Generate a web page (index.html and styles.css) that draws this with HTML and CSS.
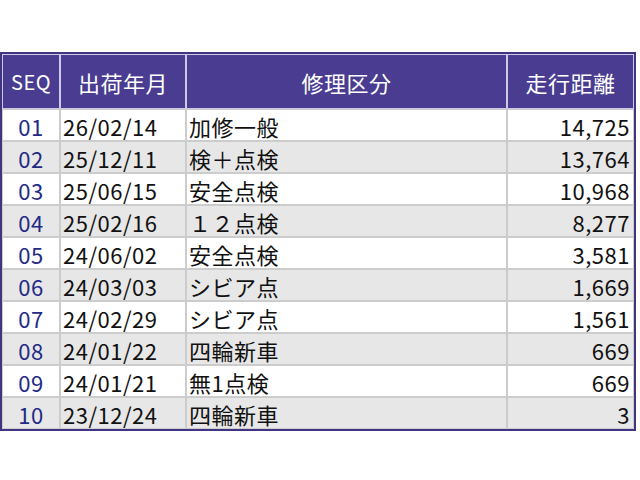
FILE: index.html
```html
<!DOCTYPE html>
<html lang="ja">
<head>
<meta charset="utf-8">
<link rel="stylesheet" href="styles.css">
</head>
<body>
<div class="wrap">
<table class="list">
<colgroup>
<col class="c-seq"><col class="c-date"><col class="c-kind"><col class="c-dist">
</colgroup>
<thead>
<tr><th class="seq-h">SEQ</th><th>出荷年月</th><th>修理区分</th><th>走行距離</th></tr>
</thead>
<tbody>
<tr><td class="seq">01</td><td class="date">26/02/14</td><td class="kind">加修一般</td><td class="dist">14,725</td></tr>
<tr class="alt"><td class="seq">02</td><td class="date">25/12/11</td><td class="kind">検＋点検</td><td class="dist">13,764</td></tr>
<tr><td class="seq">03</td><td class="date">25/06/15</td><td class="kind">安全点検</td><td class="dist">10,968</td></tr>
<tr class="alt"><td class="seq">04</td><td class="date">25/02/16</td><td class="kind">１２点検</td><td class="dist">8,277</td></tr>
<tr><td class="seq">05</td><td class="date">24/06/02</td><td class="kind">安全点検</td><td class="dist">3,581</td></tr>
<tr class="alt"><td class="seq">06</td><td class="date">24/03/03</td><td class="kind">シビア点</td><td class="dist">1,669</td></tr>
<tr><td class="seq">07</td><td class="date">24/02/29</td><td class="kind">シビア点</td><td class="dist">1,561</td></tr>
<tr class="alt"><td class="seq">08</td><td class="date">24/01/22</td><td class="kind">四輪新車</td><td class="dist">669</td></tr>
<tr><td class="seq">09</td><td class="date">24/01/21</td><td class="kind">無1点検</td><td class="dist">669</td></tr>
<tr class="alt"><td class="seq">10</td><td class="date">23/12/24</td><td class="kind">四輪新車</td><td class="dist">3</td></tr>
</tbody>
</table>
</div>
</body>
</html>
```

FILE: styles.css
```css
html, body {
  margin: 0;
  padding: 0;
  background: #ffffff;
}
.wrap {
  padding-top: 52px;
}
.list {
  width: 636px;
  table-layout: fixed;
  border-collapse: separate;
  border-spacing: 0;
  border: 2px solid #3f3582;
  font-family: "Noto Sans CJK JP", "Noto Sans", sans-serif;
  font-size: 22px;
  letter-spacing: 0.5px;
  color: #111111;
}
.c-seq { width: 58px; }
.c-date { width: 126px; }
.c-kind { width: 321px; }
.c-dist { width: 127px; }
.list th {
  height: 55px;
  padding: 0;
  background: #4a3d91;
  color: #ffffff;
  font-weight: normal;
  font-size: 22px;
  border: 1px solid #cdc8e6;
  text-align: center;
  box-sizing: border-box;
}
.list th.seq-h {
  font-size: 20px;
  letter-spacing: 0.5px;
}
.list td {
  height: 32px;
  padding: 2px 0 0 0;
  border: 1px solid #cccccc;
  line-height: 27px;
  white-space: nowrap;
  box-sizing: border-box;
}
.list tr.alt td {
  background: #e7e7e7;
}
.list td.seq {
  text-align: center;
  color: #232a86;
}
.list td.date {
  padding-left: 2px;
}
.list td.kind {
  padding-left: 2px;
}
.list td.dist {
  text-align: right;
  padding-right: 3px;
  letter-spacing: 0.5px;
}
```
